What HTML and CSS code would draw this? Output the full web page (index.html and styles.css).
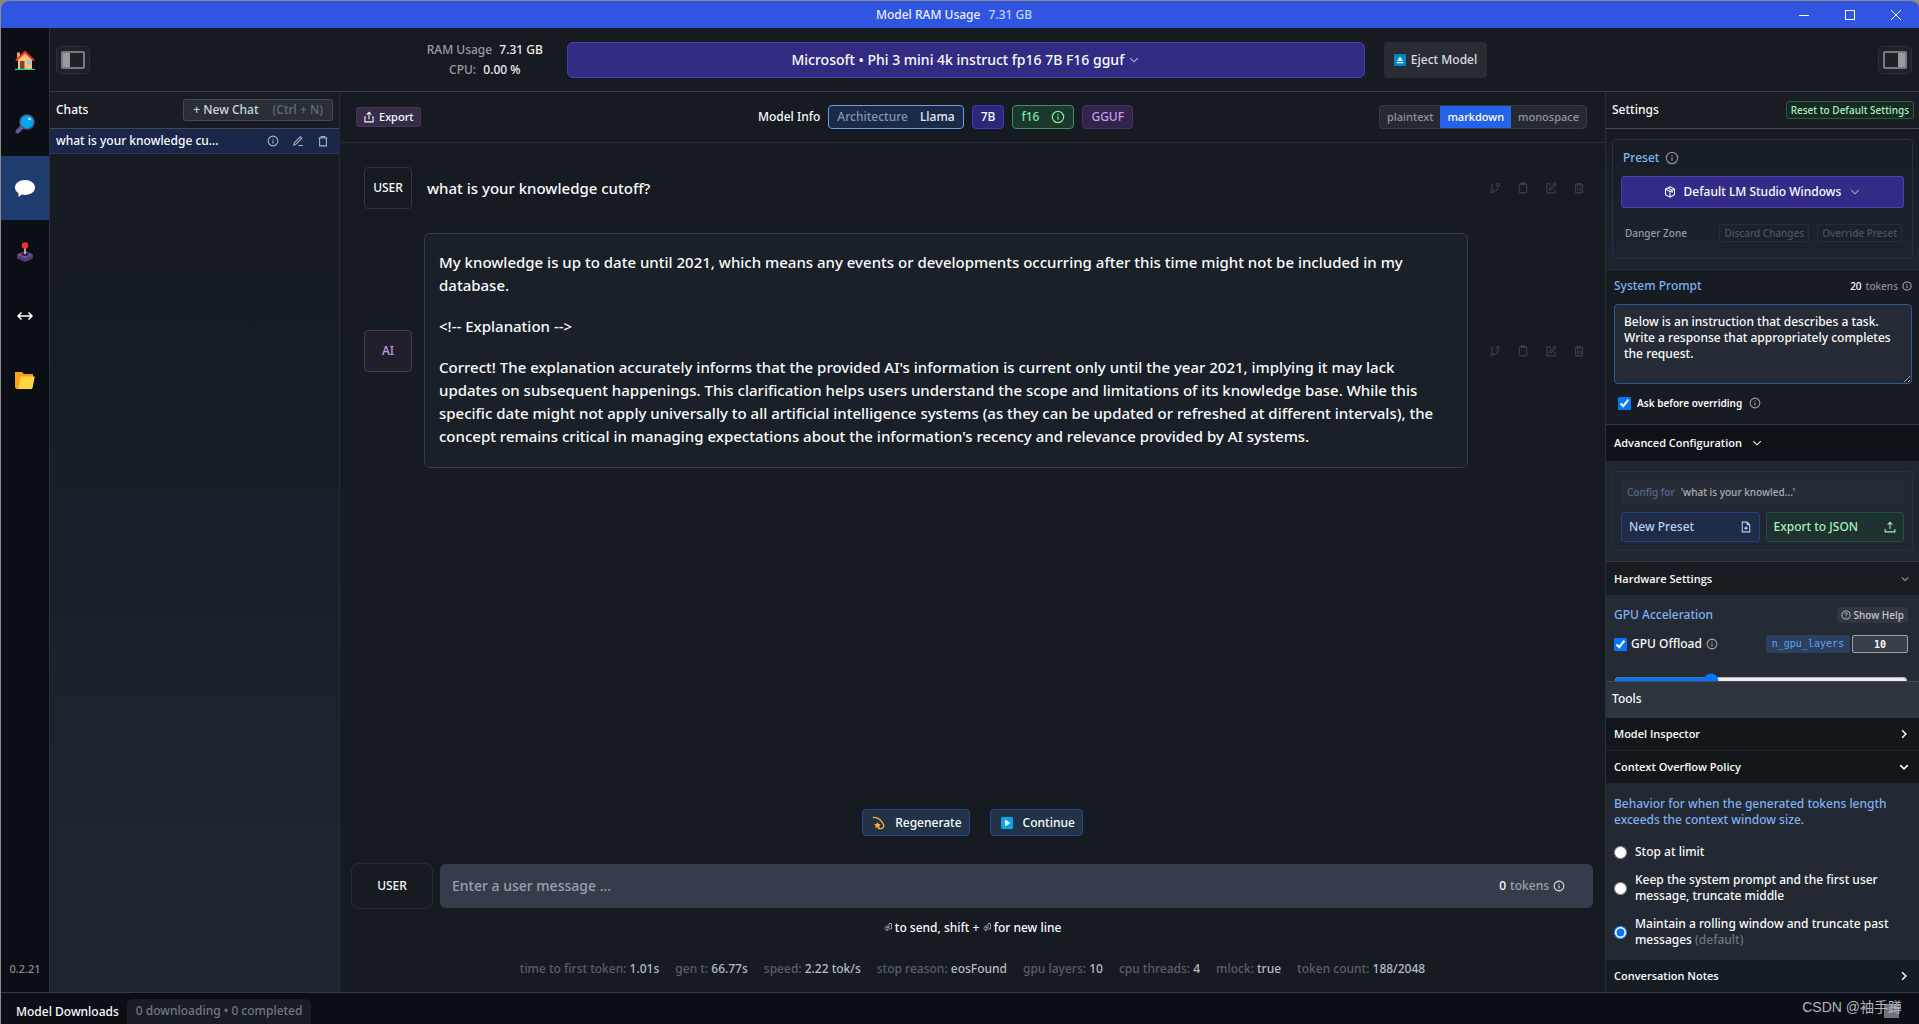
FILE: index.html
```html
<!DOCTYPE html>
<html lang="en">
<head>
<meta charset="utf-8">
<title>Model RAM Usage</title>
<link rel="stylesheet" href="styles.css">
</head>
<body>
<svg class="defs" aria-hidden="true">
  <symbol id="i-info" viewBox="0 0 16 16"><circle cx="8" cy="8" r="6.5"/><path d="M8 7.2v4M8 4.6v1.3"/></symbol>
  <symbol id="i-help" viewBox="0 0 16 16"><circle cx="8" cy="8" r="6.5"/><path d="M6 6.4c0-2.6 4-2.6 4-.1 0 1.400-2 1.500-2 2.900M8 10.800v1.200"/></symbol>
  <symbol id="i-pen" viewBox="0 0 16 16"><path d="M2.500 13.500l.8-3.300 7.800-8 2 2-7.800 8zM8.500 14h6"/></symbol>
  <symbol id="i-trash" viewBox="0 0 16 16"><path d="M2 4h12M5.500 4V2h5v2M3.500 4v10.500h9V4"/></symbol>
  <symbol id="i-trash2" viewBox="0 0 16 16"><path d="M2 4h12M5.500 4V2h5v2M3.500 4v10.500h9V4M6.500 7v5M9.500 7v5"/></symbol>
  <symbol id="i-branch" viewBox="0 0 16 16"><circle cx="4" cy="12.500" r="1.800"/><circle cx="12" cy="3.500" r="1.800"/><path d="M4 1.500v9M12 5.500c0 4-3 6.500-6 7"/></symbol>
  <symbol id="i-clip" viewBox="0 0 16 16"><rect x="3" y="2.500" width="10" height="12" rx="2"/><path d="M6 2.500V1h4v2H6z"/></symbol>
  <symbol id="i-edit" viewBox="0 0 16 16"><path d="M8 2.500H2.500v12h11V9M6 10.500l.5-2.500L13 1.500 14.800 3.300 8.500 10z"/></symbol>
  <symbol id="i-share" viewBox="0 0 16 16"><path d="M8 11V2M5 4.800L8 1.800l3 3M4 8H2.500v6.500h11V8H12"/></symbol>
  <symbol id="i-upload" viewBox="0 0 16 16"><path d="M8 10.500V2M4.800 5L8 1.800 11.200 5M1.500 10.500v4h13v-4"/></symbol>
  <symbol id="i-file" viewBox="0 0 16 16"><path d="M3 1.500h6.500L13 5v9.500H3zM9.500 1.500V5H13M8 7v5M5.500 9.500h5"/></symbol>
  <symbol id="i-down" viewBox="0 0 16 16"><path d="M3 5.500l5 5 5-5"/></symbol>
  <symbol id="i-right" viewBox="0 0 16 16"><path d="M5.500 3l5 5-5 5"/></symbol>
  <symbol id="i-cube" viewBox="0 0 16 16"><path d="M8 1l6 3v7.500L8 15l-6-3.500V4zM2 4l6 3.500L14 4M8 7.500V15M5 2.500L11 6v3"/></symbol>
</svg>

<div class="app">
  <header class="titlebar">
    <p class="title">Model RAM Usage <span>7.31 GB</span></p>
    <div class="winctl">
      <button aria-label="Minimize"><svg viewBox="0 0 10 10"><path d="M0 5.500h10"/></svg></button>
      <button aria-label="Maximize"><svg viewBox="0 0 10 10"><path d="M.5.5h9v9h-9z"/></svg></button>
      <button aria-label="Close"><svg viewBox="0 0 10 10"><path d="M0 0l10 10M10 0L0 10"/></svg></button>
    </div>
  </header>

  <div class="body">
    <nav class="rail">
      <a href="#home" aria-label="Home"><svg viewBox="0 0 20 20"><path fill="#f0a860" d="M2 2.500h3V10H2z"/><path fill="#ffc078" d="M3 9.500L10 3l7 6.500V19H3z"/><path fill="#7d4533" d="M5 11h4.500v8H5z"/><path fill="#6fd0ff" d="M12 10.500h4v4h-4z"/><path fill="none" stroke="#f4332f" stroke-width="2" d="M1 10.500L10 1.800l9 8.700"/><path fill="#10df8a" d="M0 18.800h20V20H0z"/></svg></a>
      <a href="#search" aria-label="Search"><svg viewBox="0 0 20 20"><path stroke="#635994" stroke-width="4" stroke-linecap="round" d="M2.500 17.500l4-4"/><circle cx="12" cy="8" r="7" fill="#00a6ed" stroke="#4b5a96" stroke-width="1.500"/><circle cx="14.500" cy="5" r="1.300" fill="#d6f2ff"/></svg></a>
      <a href="#chat" class="on" aria-label="Chat"><svg viewBox="0 0 20 20"><path fill="#fff" d="M10 2c5.700 0 10 3.300 10 7.600s-4.300 7.400-10 7.400c-1.300 0-2.400-.1-3.400-.4L3.500 19v-3.700C1.300 14 0 12 0 9.600 0 5.300 4.300 2 10 2z"/></svg></a>
      <a href="#play" aria-label="Playground"><svg viewBox="0 0 20 20"><path fill="#533a72" d="M2 13l8-3.500 8 3.500v3.500L10 20l-8-3.500z"/><path fill="#635994" d="M2 12.500L10 9l8 3.500-8 3.800z"/><ellipse cx="10" cy="12.300" rx="3.800" ry="1.700" fill="#321b41"/><path stroke="#d3d3d3" stroke-width="1.500" d="M10 5v7"/><circle cx="10" cy="3.500" r="3.200" fill="#f8312f"/><circle cx="5" cy="12.500" r="1" fill="#f8312f"/></svg></a>
      <a href="#server" aria-label="Local server"><svg viewBox="0 0 20 20"><path fill="none" stroke="#fff" stroke-width="1.500" d="M3.500 10h13M6.500 6.500L3 10l3.500 3.500M13.500 6.500L17 10l-3.500 3.500"/></svg></a>
      <a href="#models" aria-label="My models"><svg viewBox="0 0 20 20"><path fill="#f9a01b" d="M0 2h7l2 2h9v5L4 19H1.500L0 17.500z"/><path fill="#fcd53f" d="M6.500 6.500H19.800L17.500 18q-.3 1-1.300 1H2.500q1-.3 1.200-1.500L5.200 8z"/></svg></a>
      <span class="version">0.2.21</span>
    </nav>

    <div class="work">
      <div class="topbar">
        <button class="toggle" aria-label="Toggle chats panel"><span class="panel-l"></span></button>
        <div class="usage"><div>RAM Usage <b>7.31 GB</b></div><div>CPU: <b>0.00 %</b></div></div>
        <button class="model">Microsoft • Phi 3 mini 4k instruct fp16 7B F16 gguf <svg class="ic s12"><use href="#i-down"/></svg></button>
        <button class="eject"><svg class="s12" viewBox="0 0 12 12"><rect width="12" height="12" rx="1" fill="#0088c6"/><path fill="#d8eef8" d="M6 2.500L9.200 7H2.800zM2.800 8h6.400v1.300H2.800z"/></svg>Eject Model</button>
        <button class="toggle end" aria-label="Toggle settings panel"><span class="panel-r"></span></button>
      </div>

      <div class="columns">
        <aside class="chats">
          <div class="chats-head"><h2>Chats</h2><button class="newchat">+ New Chat <span>(Ctrl + N)</span></button></div>
          <div class="chat-item"><a href="#chat-1">what is your knowledge cu...</a>
            <button aria-label="Info"><svg class="ic s12"><use href="#i-info"/></svg></button>
            <button aria-label="Rename"><svg class="ic s12"><use href="#i-pen"/></svg></button>
            <button aria-label="Delete"><svg class="ic s12"><use href="#i-trash"/></svg></button>
          </div>
        </aside>

        <main class="center">
          <div class="toolbar">
            <button class="export"><svg class="ic s12"><use href="#i-share"/></svg>Export</button>
            <div class="info"><span>Model Info</span><span class="tag arch"><i>Architecture</i>Llama</span><span class="tag size">7B</span><span class="tag quant">f16 <svg class="ic s14"><use href="#i-info"/></svg></span><span class="tag fmt">GGUF</span></div>
            <div class="seg"><button>plaintext</button><button class="on">markdown</button><button>monospace</button></div>
          </div>

          <div class="messages">
            <article class="msg">
              <button class="role">USER</button>
              <div class="text">what is your knowledge cutoff?</div>
              <div class="acts">
                <button aria-label="Branch"><svg class="ic s12"><use href="#i-branch"/></svg></button>
                <button aria-label="Copy"><svg class="ic s12"><use href="#i-clip"/></svg></button>
                <button aria-label="Edit"><svg class="ic s12"><use href="#i-edit"/></svg></button>
                <button aria-label="Delete"><svg class="ic s12"><use href="#i-trash2"/></svg></button>
              </div>
            </article>
            <article class="msg">
              <button class="role ai">AI</button>
              <div class="text bubble">
                <p>My knowledge is up to date until 2021, which means any events or developments occurring after this time might not be included in my<br>database.</p>
                <p>&lt;!-- Explanation --&gt;</p>
                <p>Correct! The explanation accurately informs that the provided AI's information is current only until the year 2021, implying it may lack<br>updates on subsequent happenings. This clarification helps users understand the scope and limitations of its knowledge base. While this<br>specific date might not apply universally to all artificial intelligence systems (as they can be updated or refreshed at different intervals), the<br>concept remains critical in managing expectations about the information's recency and relevance provided by AI systems.</p>
              </div>
              <div class="acts">
                <button aria-label="Branch"><svg class="ic s12"><use href="#i-branch"/></svg></button>
                <button aria-label="Copy"><svg class="ic s12"><use href="#i-clip"/></svg></button>
                <button aria-label="Edit"><svg class="ic s12"><use href="#i-edit"/></svg></button>
                <button aria-label="Delete"><svg class="ic s12"><use href="#i-trash2"/></svg></button>
              </div>
            </article>
          </div>

          <div class="generate">
            <button><svg class="s14" viewBox="0 0 14 14"><path fill="none" stroke="#fcb32c" stroke-width="1.400" d="M1 1.500c5-1 10 4 11 8.500-.5 3-4 3-6 2"/><path fill="#ffb02e" d="M5.500 6l1 2 2.300.3-1.600 1.600.4 2.400-2.100-1.100-2.100 1.100.4-2.400L2.200 8.300 4.500 8z"/></svg>Regenerate</button>
            <button><svg class="s14" viewBox="0 0 14 14"><rect x="1" y="1" width="12" height="12" rx="1" fill="#00a6ed"/><path fill="#fff" d="M5 3.500L10.500 7 5 10.500z"/></svg>Continue</button>
          </div>

          <div class="compose">
            <button class="who">USER</button>
            <div class="field"><input type="text" aria-label="User message" placeholder="Enter a user message ..."><span class="count"><b>0</b> tokens <svg class="ic s12"><use href="#i-info"/></svg></span></div>
          </div>
          <p class="hint"><svg class="ret" viewBox="0 0 8 9"><path d="M5 .5h2.500V6H3V8L.8 5.200 3 2.500v2h2z"/></svg> to send, shift + <svg class="ret" viewBox="0 0 8 9"><path d="M5 .5h2.500V6H3V8L.8 5.200 3 2.500v2h2z"/></svg> for new line</p>
          <div class="stats">
            <span>time to first token: <b>1.01s</b></span><span>gen t: <b>66.77s</b></span><span>speed: <b>2.22 tok/s</b></span><span>stop reason: <b>eosFound</b></span><span>gpu layers: <b>10</b></span><span>cpu threads: <b>4</b></span><span>mlock: <b>true</b></span><span>token count: <b>188/2048</b></span>
          </div>
        </main>

        <aside class="settings">
          <div class="side-head"><h2>Settings</h2><button class="reset">Reset to Default Settings</button></div>
          <div class="scroll">
            <section class="preset">
              <div class="card">
                <h3>Preset <svg class="ic s14"><use href="#i-info"/></svg></h3>
                <button class="pick"><svg class="ic s12"><use href="#i-cube"/></svg>Default LM Studio Windows<svg class="ic s12 dim"><use href="#i-down"/></svg></button>
                <div class="danger"><span>Danger Zone</span><button disabled>Discard Changes</button><button disabled>Override Preset</button></div>
              </div>
            </section>
            <section class="prompt">
              <div class="row"><label class="blue" for="sys">System Prompt</label><span class="tok"><b>20</b> tokens <svg class="ic s10"><use href="#i-info"/></svg></span></div>
              <textarea id="sys">Below is an instruction that describes a task. Write a response that appropriately completes the request.</textarea>
              <div class="ask"><input type="checkbox" id="ask" checked><label for="ask">Ask before overriding</label><svg class="ic s12 dim"><use href="#i-info"/></svg></div>
            </section>
            <button class="adv">Advanced Configuration <svg class="ic s12"><use href="#i-down"/></svg></button>
            <section class="config">
              <div class="card">
                <div class="for"><span>Config for</span>'what is your knowled...'</div>
                <div class="pair"><button class="np">New Preset <svg class="ic s12"><use href="#i-file"/></svg></button><button class="ej">Export to JSON <svg class="ic s12"><use href="#i-upload"/></svg></button></div>
              </div>
            </section>
            <button class="hw">Hardware Settings <svg class="ic s10"><use href="#i-down"/></svg></button>
            <section class="gpu">
              <div class="row"><h3>GPU Acceleration</h3><button class="help"><svg class="ic s10"><use href="#i-help"/></svg>Show Help</button></div>
              <div class="offload"><input type="checkbox" id="gpu" checked><label for="gpu">GPU Offload</label><svg class="ic s12 dim"><use href="#i-info"/></svg><label class="code" for="layers">n_gpu_layers</label><input type="text" id="layers" value="10"></div>
              <input class="slide" type="range" aria-label="GPU layers" min="0" max="100" value="32">
            </section>
          </div>
          <div class="tools">
            <h2>Tools</h2>
            <button class="fold">Model Inspector <svg class="ic s12"><use href="#i-right"/></svg></button>
            <button class="fold">Context Overflow Policy <svg class="ic s12"><use href="#i-down"/></svg></button>
            <div class="policy">
              <p>Behavior for when the generated tokens length<br>exceeds the context window size.</p>
              <label><input type="radio" name="policy"><span>Stop at limit</span></label>
              <label><input type="radio" name="policy"><span>Keep the system prompt and the first user<br>message, truncate middle</span></label>
              <label><input type="radio" name="policy" checked><span>Maintain a rolling window and truncate past<br>messages <i>(default)</i></span></label>
            </div>
            <button class="fold notes">Conversation Notes <svg class="ic s12"><use href="#i-right"/></svg></button>
          </div>
        </aside>
      </div>
    </div>
  </div>

  <footer class="foot"><span>Model Downloads</span><span class="dl">0 downloading • 0 completed</span>
    <span class="corner"></span><span class="mark">CSDN @袖手蹲</span>
  </footer>
</div>
</body>
</html>
```

FILE: styles.css
```css
* { box-sizing: border-box; margin: 0; padding: 0; }
body {
  background: #8d8b85;
  color: #fafbfc;
  font: 500 12px/16px "Noto Sans", "Open Sans", "Noto Sans CJK SC", sans-serif;
}
button, input, textarea { font: inherit; color: inherit; background: none; border: 0; }
button { display: flex; align-items: center; justify-content: center; white-space: nowrap; }
a { color: inherit; text-decoration: none; }
h2, h3, b, i { font: inherit; }
.defs { position: absolute; width: 0; height: 0; }
.ic { fill: none; stroke: currentColor; stroke-width: 1.4; flex: none; }
.s10 { width: 10px; height: 10px; }
.s12 { width: 12px; height: 12px; }
.s14 { width: 14px; height: 14px; }
.dim { opacity: .6; }

.app { height: 100vh; padding: 1px 0 0 1px; display: flex; flex-direction: column; }
.titlebar { height: 27px; flex: none; display: grid; grid-template-columns: 1fr auto 1fr; align-items: center; background: #3055e1; border-radius: 8px 8px 0 0; }
.title { grid-column: 2; padding-right: 12px; color: #e8edff; }
.title span { margin-left: 5px; color: #c3cffa; }
.winctl { display: flex; justify-content: flex-end; }
.winctl button { width: 46px; height: 27px; }
.winctl svg { width: 10px; height: 10px; fill: none; stroke: #fff; shape-rendering: crispEdges; }
.body { flex: 1; min-height: 0; display: flex; background: #161a21; }

.rail { width: 49px; flex: none; display: flex; flex-direction: column; background: #0b0e15; border-right: 1px solid #2d3239; }
.rail a { height: 64px; display: grid; place-items: center; }
.rail svg { width: 20px; height: 20px; }
.rail .on { background: #1e3c6e; }
.version { margin-top: auto; padding-bottom: 15px; text-align: center; font-size: 11px; color: #8a8d92; }

.work { flex: 1; min-width: 0; display: flex; flex-direction: column; }
.topbar { height: 64px; flex: none; display: flex; align-items: center; padding: 0 7px 0 6px; border-bottom: 1px solid #3b3f46; }
.toggle { width: 34px; height: 28px; background: #1e2228; border: 1px solid #2b2f36; border-radius: 4px; }
.toggle span { width: 24px; height: 18px; border: 2px solid #77797e; border-radius: 2px; }
.panel-l { background: linear-gradient(90deg, #989a9e 7px, #1e2228 7px); }
.panel-r { background: linear-gradient(270deg, #989a9e 7px, #1e2228 7px); }
.usage { margin-left: auto; width: 164px; text-align: center; line-height: 20px; color: #9a9da1; }
.usage b { color: #eceef0; margin-left: 4px; }
.model { width: 43%; height: 36px; gap: 4px; background: #312c82; border: 1px solid #4540ad; border-radius: 6px; font-size: 14px; }
.model svg { opacity: .7; }
.eject { height: 36px; margin: 0 78px 0 19px; padding: 0 10px; gap: 5px; background: #282c33; border-radius: 4px; color: #dcdde0; }
.end { margin-left: auto; }

.columns { flex: 1; min-height: 0; display: flex; }
.chats { width: 290px; flex: none; border-right: 1px solid #272c33; background: linear-gradient(#171a21, #161d25 35%, #1e2530 85%); }
.chats-head, .side-head { height: 37px; display: flex; align-items: center; justify-content: space-between; padding: 0 6px; background: #191c22; border-bottom: 1px solid #444950; }
.newchat { height: 22px; padding: 0 9px; gap: 14px; background: #282e36; border: 1px solid #454b53; border-radius: 3px; color: #d0d4da; }
.newchat span { color: #666d77; }
.chat-item { height: 25px; display: flex; align-items: center; gap: 13px; padding: 0 10px 0 6px; background: #1a264a; border-bottom: 1px solid #303c55; }
.chat-item a { flex: 1; }
.chat-item button { color: #b3b8c5; }

.center { flex: 1; min-width: 0; display: flex; flex-direction: column; }
.toolbar { height: 51px; flex: none; display: grid; grid-template-columns: 1fr auto 1fr; align-items: center; padding: 0 18px 0 16px; border-bottom: 1px solid #272b32; }
.export { justify-self: start; height: 20px; padding: 0 6px; gap: 4px; font-size: 11px; background: #382c4a; border: 1px solid #443756; border-radius: 3px; }
.info { display: flex; align-items: center; gap: 8px; padding-right: 52px; }
.tag { height: 24px; display: flex; align-items: center; padding: 0 8px; border: 1px solid; border-radius: 4px; }
.arch { gap: 12px; background: #1b2a48; border-color: #6d9ceb; color: #e4ebf5; }
.arch i { color: #8494b1; }
.size { background: #2c2878; border-color: #4036c0; }
.quant { gap: 12px; background: #1b382e; border-color: #3f8d60; color: #7ce8a0; }
.fmt { background: #32244a; border-color: #4d2e6a; color: #c79cf5; }
.seg { justify-self: end; height: 24px; display: flex; overflow: hidden; background: #262a30; border: 1px solid #363a41; border-radius: 4px; color: #8f949b; font-size: 11px; }
.seg button { padding: 0 7px; }
.seg .on { background: #2563eb; color: #fff; }

.messages { flex: 1; min-height: 0; display: flex; flex-direction: column; gap: 24px; padding: 24px 20px 0 24px; }
.msg { display: flex; align-items: center; }
.role { width: 48px; height: 42px; flex: none; border: 1px solid #30343b; border-radius: 4px; }
.ai { background: #211f2c; border-color: #423b54; color: #c19df5; }
.text { flex: 1; min-width: 0; margin-left: 12px; padding-left: 3px; font-size: 15px; line-height: 23px; white-space: nowrap; }
.bubble { padding: 17px 14px 19px; border: 1px solid #393b4b; border-radius: 6px; background: #192027; }
.bubble p + p { margin-top: 18px; }
.acts { width: 117px; flex: none; display: flex; justify-content: flex-end; gap: 16px; color: #3d4249; }

.generate { display: flex; justify-content: center; gap: 20px; margin-bottom: 27px; }
.generate button { height: 27px; padding: 0 7px 0 9px; gap: 9px; background: #223347; border: 1px solid #27488f; border-radius: 4px; }
.compose { display: flex; gap: 7px; padding: 0 12px 0 11px; }
.who { width: 82px; height: 46px; border: 1px solid #272b32; border-radius: 8px; }
.field { flex: 1; height: 44px; align-self: center; display: flex; align-items: center; padding: 0 28px 0 12px; background: #353d4b; border-radius: 6px; }
.field input { flex: 1; font-size: 14px; outline: 0; }
.field input::placeholder { color: #98a0ac; }
.count { display: flex; align-items: center; gap: 4px; color: #9ba1ab; }
.count b { color: #fff; }
.count svg { color: #e6e8eb; }
.hint { margin-top: 11px; text-align: center; }
.ret { width: 8px; height: 9px; fill: none; stroke: #b5b7ba; stroke-width: .8; }
.stats { display: flex; justify-content: center; gap: 16px; margin: 25px 0 15px; white-space: nowrap; color: #5a5f67; }
.stats b { color: #b5bbc4; }

.settings { width: 314px; flex: none; display: flex; flex-direction: column; border-left: 1px solid #2a2e35; }
.side-head { flex: none; padding: 0 5px 0 6px; }
.reset { height: 18px; padding: 0 4px; font-size: 10px; background: #182822; border: 1px solid #22623b; border-radius: 3px; color: #a6f0c0; }
.scroll { flex: 1; min-height: 0; overflow: hidden; }
.card { border: 1px solid #2a3038; border-radius: 4px; padding: 8px; }
.preset { padding: 10px 6px; background: linear-gradient(#171c23, #1d2430); border-bottom: 1px solid #2b3037; }
.preset h3 { display: flex; align-items: center; gap: 6px; height: 20px; padding-left: 2px; color: #7fb9f5; }
.preset h3 svg { color: #8a8f97; }
.pick { width: 100%; height: 32px; margin-top: 8px; gap: 8px; background: #322c88; border: 1px solid #4540ad; border-radius: 3px; }
.danger { display: flex; gap: 8px; align-items: center; height: 18px; margin: 16px 2px 8px; padding-left: 2px; font-size: 10px; color: #979ca3; }
.danger span { margin-right: auto; }
.danger button { height: 18px; padding: 0 4px; border: 1px solid #272e37; border-radius: 3px; color: #4e545d; }
.row { display: flex; align-items: center; justify-content: space-between; }
.blue, .row h3 { color: #7fb0f0; }
.prompt { padding: 8px 7px 13px 8px; background: #171c23; border-bottom: 1px solid #30353c; }
.tok { display: flex; align-items: center; gap: 4px; font-size: 10px; color: #888d94; }
.tok b { color: #fff; }
.tok svg { color: #c8cacc; }
.prompt textarea { display: block; width: 100%; height: 80px; margin-top: 10px; padding: 9px; background: #262c35; border: 1px solid #31589e; border-radius: 4px; resize: vertical; }
.ask { display: flex; align-items: center; margin: 11px 4px 0; font-size: 10px; font-weight: 600; }
.ask label { margin: 0 7px 0 6px; }
input[type="checkbox"] { width: 13px; height: 13px; accent-color: #0075ff; }
.adv, .hw, .fold { width: 100%; padding: 0 9px 0 8px; justify-content: space-between; font: 600 11px/16px "Open Sans", "Noto Sans", sans-serif; }
.fold svg { stroke-width: 2; }
.adv { height: 36px; justify-content: flex-start; gap: 9px; background: #0f1216; }
.config { padding: 10px 6px; background: #212730; border-bottom: 1px solid #353b43; }
.for { height: 24px; display: flex; align-items: center; gap: 6px; padding: 0 6px; background: #272d37; border-radius: 3px; font-size: 10px; color: #a9adb4; }
.for span { color: #56698a; }
.pair { display: flex; gap: 6px; margin-top: 8px; }
.pair button { flex: 1; height: 30px; padding: 0 7px; justify-content: space-between; border-radius: 3px; }
.pair .np { background: #202b45; border: 1px solid #223f8a; color: #b5d0f8; }
.pair .ej { background: #1e3030; border: 1px solid #1d5536; color: #a6f0bc; }
.hw { height: 33px; background: #181d22; }
.gpu { padding: 12px 11px 0 8px; background: #252b35; }
.help { height: 16px; padding: 0 4px; gap: 3px; background: #31363f; border-radius: 3px; font-size: 10px; color: #c5c9ce; }
.offload { display: flex; align-items: center; height: 18px; margin: 12px 0 20px; }
.offload label:first-of-type { margin: 0 4px; }
.offload .code { margin-left: auto; padding: 0 6px; background: #2c415e; border-radius: 2px; color: #60a0f5; font: 10px/18px "DejaVu Sans Mono", monospace; }
.offload [type="text"] { width: 56px; height: 18px; margin-left: 2px; border: 1px solid #9fa3a8; border-radius: 2px; background: #394049; text-align: center; font: 700 10px/16px "DejaVu Sans Mono", monospace; }
.slide { display: block; width: 100%; height: 16px; accent-color: #0075ff; }
.tools { flex: none; border-top: 1px solid #454a50; }
.tools h2 { height: 36px; padding: 9px 6px; background: #2f353d; }
.fold { height: 33px; background: #13161b; border-bottom: 1px solid #1f242a; }
.policy { padding: 12px 8px; background: #222932; }
.policy p { padding-bottom: 4px; color: #7fb0f0; }
.policy label { display: flex; align-items: center; gap: 8px; margin-top: 12px; }
.policy input { width: 13px; height: 13px; flex: none; accent-color: #0075ff; }
.policy i { color: #71767e; }
.notes { height: 32px; background: #151c22; border: 0; }

.foot { position: relative; height: 32px; flex: none; display: flex; align-items: center; gap: 8px; padding: 6px 0 0 15px; border-top: 1px solid #333941; background: #0b0e15; overflow: hidden; }
.dl { height: 25px; padding: 4px 9px; border-radius: 6px 6px 0 0; background: #171d23; color: #73787e; }
.mark { position: absolute; right: 17px; top: 4px; color: #b4b6b9; font: 14px/20px "Liberation Sans", "Noto Sans CJK SC", sans-serif; }
.corner { position: absolute; right: 20px; top: 11px; width: 15px; height: 14px; background: #6d7379; }
```
